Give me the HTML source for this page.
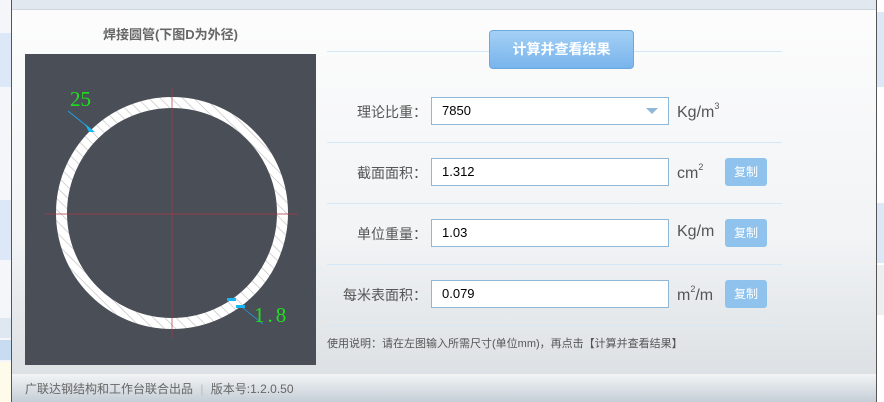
<!DOCTYPE html>
<html><head><meta charset="utf-8"><style>
*{margin:0;padding:0;box-sizing:border-box}
body{width:884px;height:402px;overflow:hidden;position:relative;background:#fff;font-family:"Liberation Sans","Noto Sans CJK SC",sans-serif}
.abs{position:absolute}
#dlg{left:11px;top:0;width:866px;height:402px;background:linear-gradient(#fdfdfd 0%,#f1f3f5 60%,#d8dde1 100%);border-left:1px solid #555;border-right:1px solid #555}
.lbl{position:absolute;width:100px;text-align:right;font-size:14px;color:#555;left:327px}
.inp{position:absolute;left:431px;width:238px;height:28px;border:1px solid #8fb8d8;background:#fff;font-size:13px;padding-left:10px;line-height:26px;color:#000}
.unit{position:absolute;left:677px;font-size:16px;color:#555}
.unit sup{font-size:9px;vertical-align:8px}
.cp{position:absolute;left:725px;width:42px;height:28px;background:#8fc3ee;border-radius:3px;color:#fff;font-size:12px;text-align:center;line-height:28px}
.sep{position:absolute;left:327px;width:455px;height:1px;background:#d6e8f5}
</style></head><body>
<div class="abs" style="left:0;top:0;width:11px;height:402px;background:#f4f6f9"></div>
<div class="abs" style="left:0;top:33px;width:11px;height:54px;background:#dce8f8"></div>
<div class="abs" style="left:0;top:200px;width:11px;height:60px;background:#dce8f8"></div>
<div class="abs" style="left:0;top:318px;width:11px;height:20px;background:#dfe7f0"></div>
<div class="abs" style="left:0;top:340px;width:11px;height:20px;background:#c7dcf0"></div>
<div class="abs" style="left:0;top:362px;width:11px;height:40px;background:#fffbea"></div>
<div class="abs" style="left:877px;top:12px;width:7px;height:75px;background:#dce8f8"></div>
<div class="abs" style="left:877px;top:203px;width:7px;height:60px;background:#dce8f8"></div>
<div class="abs" style="left:877px;top:265px;width:7px;height:50px;background:#eceef0"></div>
<div id="dlg" class="abs">
<div class="abs" style="left:0;top:0;width:864px;height:10px;background:#e1e8f0;border-bottom:1px solid #cfd6de"></div>
<div class="abs" style="left:0;top:374px;width:864px;height:28px;background:linear-gradient(#f2f4f6,#c5ced6)"></div>
</div>
<div class="abs" style="left:25px;top:24px;width:291px;text-align:center;font-size:13px;font-weight:bold;color:#666">焊接圆管(下图D为外径)</div>
<svg class="abs" style="left:25px;top:54px" width="291" height="311">
<defs><pattern id="h" width="8" height="8" patternUnits="userSpaceOnUse" patternTransform="rotate(-45)"><rect width="8" height="8" fill="#fff"/><line x1="0" y1="0" x2="0" y2="8" stroke="#bbb" stroke-width="1.2"/></pattern></defs>
<rect width="291" height="311" fill="#4a4e56"/>
<circle cx="147" cy="159" r="110.5" fill="none" stroke="url(#h)" stroke-width="11"/>
<line x1="20" y1="160" x2="273" y2="160" stroke="#a83848" stroke-width="0.7"/>
<line x1="147" y1="34" x2="147" y2="284" stroke="#a83848" stroke-width="0.7"/>
<line x1="43" y1="57" x2="68" y2="77" stroke="#1ea0e0" stroke-width="1"/>
<polygon points="60,70 70,78 64,78" fill="#19b6f4"/>
<rect x="202" y="244" width="9" height="3" fill="#19b6f4"/>
<rect x="211" y="251" width="9" height="3" fill="#19b6f4"/>
<line x1="218" y1="254" x2="238" y2="270" stroke="#1ea0e0" stroke-width="0.8"/>
<text x="45" y="52" fill="#1fe01f" font-family="Liberation Serif,serif" font-size="21">25</text>
<text x="229" y="268" fill="#1fe01f" font-family="Liberation Serif,serif" font-size="21" letter-spacing="3">1.8</text>
</svg>
<div class="sep" style="top:51px"></div>
<div class="abs" style="left:489px;top:30px;width:145px;height:39px;border-radius:4px;background:linear-gradient(#a4d0f5,#78b4ec);border:1px solid #6aa8e0;color:#fff;font-size:14px;font-weight:bold;text-align:center;line-height:37px">计算并查看结果</div>
<div class="lbl" style="top:102px">理论比重：</div>
<div class="inp" style="top:97px">7850<span style="position:absolute;right:10px;top:10px;width:0;height:0;border-left:6px solid transparent;border-right:6px solid transparent;border-top:6px solid #8fb8d8"></span></div>
<div class="unit" style="top:101px">Kg/m<sup>3</sup></div>
<div class="sep" style="top:142px"></div>
<div class="lbl" style="top:163px">截面面积：</div>
<div class="inp" style="top:158px">1.312</div>
<div class="unit" style="top:162px">cm<sup>2</sup></div>
<div class="cp" style="top:158px">复制</div>
<div class="sep" style="top:203px"></div>
<div class="lbl" style="top:224px">单位重量：</div>
<div class="inp" style="top:219px">1.03</div>
<div class="unit" style="top:223px">Kg/m</div>
<div class="cp" style="top:219px">复制</div>
<div class="sep" style="top:264px"></div>
<div class="lbl" style="top:285px">每米表面积：</div>
<div class="inp" style="top:280px">0.079</div>
<div class="unit" style="top:284px">m<sup>2</sup>/m</div>
<div class="cp" style="top:280px">复制</div>
<div class="sep" style="top:325px"></div>
<div class="abs" style="left:327px;top:335px;font-size:11px;color:#555">使用说明：请在左图输入所需尺寸(单位mm)，再点击【计算并查看结果】</div>
<div class="abs" style="left:25px;top:380px;font-size:12px;color:#666">广联达钢结构和工作台联合出品 <span style="color:#bbb;margin:0 4px">|</span> 版本号:1.2.0.50</div>
</body></html>
